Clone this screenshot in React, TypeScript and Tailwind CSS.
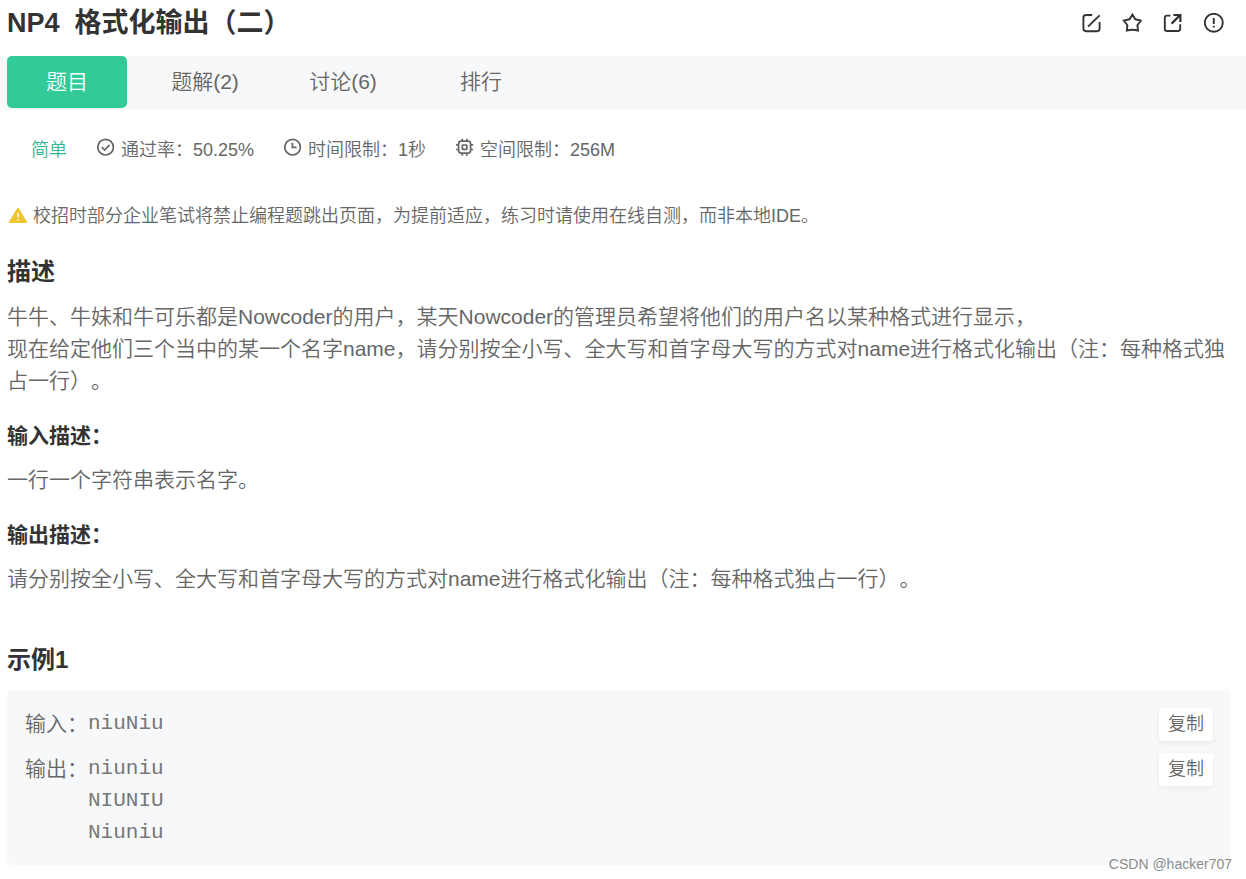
import type { ReactNode } from 'react';

const tabs = ['题目', '题解(2)', '讨论(6)', '排行'];

function CheckIcon() {
    return (
        <svg viewBox="0 0 18 18" className="size-[18px]" fill="none" stroke="currentColor" strokeWidth="1.7">
            <circle cx="8.6" cy="9.2" r="7.8" />
            <path d="M4.8 9.2l2.8 2.8 5-5.2" />
        </svg>
    );
}

function ClockIcon() {
    return (
        <svg viewBox="0 0 18 18" className="size-[18px]" fill="none" stroke="currentColor" strokeWidth="1.7">
            <circle cx="8.6" cy="9.2" r="7.8" />
            <path d="M8.4 4.8v4.6h4.2" />
        </svg>
    );
}

function ChipIcon() {
    return (
        <svg viewBox="0 0 18 18" className="size-[18px]" fill="none" stroke="currentColor" strokeWidth="1.7">
            <rect x="2.6" y="3.2" width="12" height="12" rx="2.6" />
            <rect x="6.4" y="7" width="4.4" height="4.4" rx="0.4" />
            <path d="M6.3 3.2V.7M10.9 3.2V.7M6.3 17.7v-2.5M10.9 17.7v-2.5M2.6 6.9H.1M2.6 11.5H.1M17.1 6.9h-2.5M17.1 11.5h-2.5" />
        </svg>
    );
}

const stats = [
    { icon: <CheckIcon />, text: '通过率：50.25%' },
    { icon: <ClockIcon />, text: '时间限制：1秒' },
    { icon: <ChipIcon />, text: '空间限制：256M' },
];

const actions: { label: string; shape: ReactNode }[] = [
    {
        label: '笔记',
        shape: (
            <>
                <path d="M11.2 2H5Q2.4 2 2.4 4.6v11q0 2.6 2.6 2.6h11q2.6 0 2.6-2.6V9" />
                <path d="M7 13.6L18.6 2.4" />
            </>
        ),
    },
    {
        label: '收藏',
        shape: (
            <path d="M10.4 1.6l2.9 4.7 5.6 1.3-3.5 4.6.6 5.3q-2.8-.8-5.6-.8t-5.6.8l.6-5.3-3.5-4.6 5.6-1.3z" />
        ),
    },
    {
        label: '分享',
        shape: (
            <>
                <path d="M7.4 2.6H4Q1.8 2.6 1.8 4.8v11q0 2.2 2.2 2.2h11q2.2 0 2.2-2.2v-4.6" />
                <path d="M8.6 10.6l8.2-8.2M10.4 2h7v7" strokeWidth="2.2" />
            </>
        ),
    },
    {
        label: '反馈',
        shape: (
            <>
                <circle cx="9.8" cy="9.8" r="9" />
                <path d="M9.8 5v6M9.8 12.8v1.8" />
            </>
        ),
    },
];

const outputs = ['niuniu', 'NIUNIU', 'Niuniu'];

function SubTitle({ children }: { children: ReactNode }) {
    return <h3 className="mt-[23px] text-[21px] leading-8 font-bold text-[#333]">{children}</h3>;
}

function CopyButton() {
    return (
        <button
            type="button"
            className="h-[33px] w-[54px] shrink-0 rounded-[3px] bg-white pb-[2px] text-lg leading-6 shadow-[0_2px_6px_rgba(0,0,0,0.06)]"
        >
            复制
        </button>
    );
}

export default function App() {
    return (
        <div className="relative bg-white pb-[14px] font-['Liberation_Sans','Noto_Sans_CJK_SC',sans-serif] text-[21px] leading-8 font-[350] text-[#666] [text-spacing-trim:space-all]">
            <header className="flex h-14 items-center justify-between pr-[22px] pb-[10px] pl-[7px]">
                <h1 className="text-[27px] leading-10 font-bold whitespace-pre text-[#333]">{'NP4  格式化输出（二）'}</h1>
                <div className="flex gap-[21px] text-[#333]">
                    {actions.map((a) => (
                        <button key={a.label} type="button" aria-label={a.label}>
                            <svg viewBox="0 0 20 20" className="size-5" fill="none" stroke="currentColor" strokeWidth="1.9">
                                {a.shape}
                            </svg>
                        </button>
                    ))}
                </div>
            </header>

            <nav className="flex h-[54px] items-start gap-[18px] bg-[#f7f8f9] pl-[7px]">
                {tabs.map((tab, i) => (
                    <a
                        key={tab}
                        href="#"
                        className={
                            i === 0
                                ? 'flex h-[52px] w-[120px] items-center justify-center rounded-[5px] bg-[#32ca99] text-white'
                                : 'flex h-[52px] w-[120px] items-center justify-center'
                        }
                    >
                        {tab}
                    </a>
                ))}
            </nav>

            <main className="pr-[15px] pl-[7px]">
                <div className="mt-7 flex gap-[30px] pl-6 text-lg leading-6">
                    <span className="text-[#32b897]">简单</span>
                    {stats.map((s) => (
                        <span key={s.text} className="flex gap-[6px]">
                            <span>{s.icon}</span>
                            {s.text}
                        </span>
                    ))}
                </div>

                <p className="mt-[42px] flex items-center gap-[6px] text-lg leading-6">
                    <svg viewBox="0 0 20 18" className="h-[18px] w-5 shrink-0">
                        <path d="M11 1.8l8 13.2H3z" fill="#efc62f" stroke="#efc62f" strokeWidth="2" strokeLinejoin="round" />
                        <path d="M11 6v4.6M11 12.2v1.8" stroke="#fff" strokeWidth="1.4" />
                    </svg>
                    校招时部分企业笔试将禁止编程题跳出页面，为提前适应，练习时请使用在线自测，而非本地IDE。
                </p>

                <h2 className="mt-7 text-2xl leading-8 font-bold text-[#333]">描述</h2>
                <p className="mt-[13px]">
                    牛牛、牛妹和牛可乐都是Nowcoder的用户，某天Nowcoder的管理员希望将他们的用户名以某种格式进行显示，
                    <br />
                    现在给定他们三个当中的某一个名字name，请分别按全小写、全大写和首字母大写的方式对name进行格式化输出（注：每种格式独占一行）。
                </p>

                <SubTitle>输入描述：</SubTitle>
                <p className="mt-3">一行一个字符串表示名字。</p>

                <SubTitle>输出描述：</SubTitle>
                <p className="mt-3">请分别按全小写、全大写和首字母大写的方式对name进行格式化输出（注：每种格式独占一行）。</p>

                <h2 className="mt-[49px] text-2xl leading-8 font-bold text-[#333]">示例1</h2>
                <section className="mt-[14px] flex flex-col gap-[13px] rounded-[5px] bg-[#f7f8f9] px-[18px] pt-[18px] pb-4">
                    <div className="flex h-8">
                        <span>输入：</span>
                        <pre className="flex-1 font-['Liberation_Mono',monospace] text-[#777]">niuNiu</pre>
                        <CopyButton />
                    </div>
                    <div className="flex">
                        <span>输出：</span>
                        <pre className="flex-1 font-['Liberation_Mono',monospace] text-[#777]">{outputs.join('\n')}</pre>
                        <CopyButton />
                    </div>
                </section>
            </main>

            <span className="absolute right-[14px] bottom-[5px] text-sm leading-5 text-[#8c8c8c]">CSDN @hacker707</span>
        </div>
    );
}
